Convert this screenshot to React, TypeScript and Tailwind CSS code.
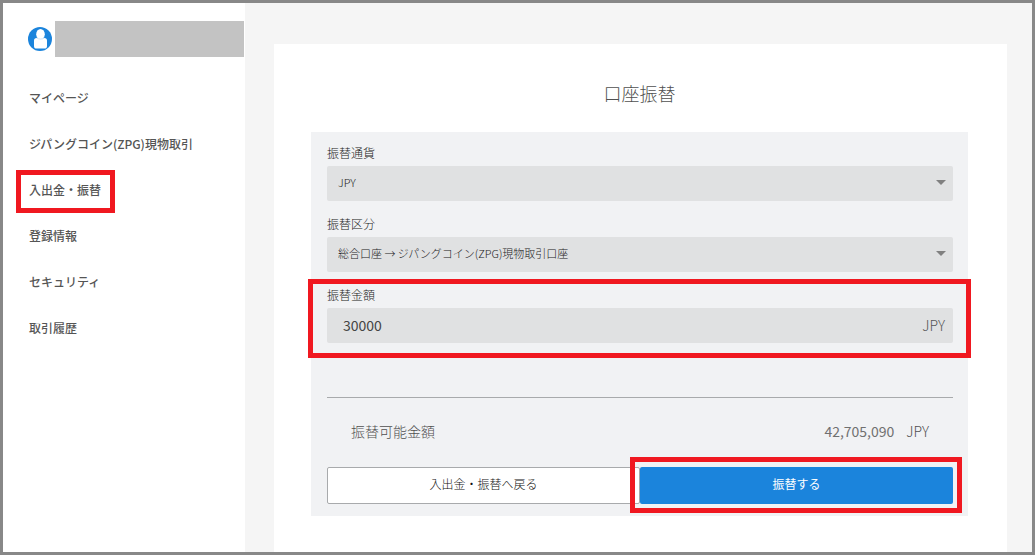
import React from 'react';

const menuItems = [
  { label: 'マイページ' },
  { label: 'ジパングコイン(ZPG)現物取引' },
  { label: '入出金・振替', marked: true },
  { label: '登録情報' },
  { label: 'セキュリティ' },
  { label: '取引履歴' },
];

function UserIcon() {
  return (
    <svg viewBox="0 0 24 24" className="w-6 h-6 shrink-0" aria-hidden="true">
      <circle cx="12" cy="12" r="12" fill="#1b84dc" />
      <rect x="6" y="11" width="13" height="10.500" rx="2.600" fill="#fff" />
      <ellipse cx="12.500" cy="7.300" rx="4.300" ry="5.200" fill="#fff" />
      <path d="M8.600 11c1.900 1.400 5.900 1.400 7.800 0" fill="none" stroke="#bcdaf5" strokeWidth=".8" />
    </svg>
  );
}

function Sidebar() {
  return (
    <aside className="w-[242px] shrink-0 bg-white pt-[18px]">
      <div className="flex items-center gap-[3px] pl-[25px] pr-px">
        <UserIcon />
        <div className="h-9 flex-1 bg-[#c3c3c3]" />
      </div>
      <nav className="mt-[31px] pl-[26px]">
        <ul className="flex flex-col items-start gap-[26px]">
          {menuItems.map((item) => (
            <li key={item.label} className="relative h-5">
              <a href="#" className="block text-[12px] leading-5 font-medium text-[#555]">
                {item.label}
              </a>
              {item.marked && (
                <span className="absolute -left-[13px] -right-[14px] -top-[10px] -bottom-[13px] border-[5px] border-[#f01820] pointer-events-none" />
              )}
            </li>
          ))}
        </ul>
      </nav>
    </aside>
  );
}

interface SelectFieldProps {
  id: string;
  label: string;
  value: string;
}

function SelectField({ id, label, value }: SelectFieldProps) {
  return (
    <div>
      <label htmlFor={id} className="block mb-[3px] text-[12px] leading-5 text-[#222]">
        {label}
      </label>
      <div className="relative">
        <select
          id={id}
          className="block appearance-none w-full h-[35px] rounded-xs bg-[#e0e1e2] pl-[11px] pr-8 pb-[3px] text-[11px] text-[#222]"
        >
          <option>{value}</option>
        </select>
        <svg
          viewBox="0 0 10 5"
          className="absolute right-[7px] top-[14px] w-[10px] h-[5px] pointer-events-none"
          aria-hidden="true"
        >
          <path d="M0 0h10L5 5z" fill="#808080" />
        </svg>
      </div>
    </div>
  );
}

export default function App() {
  return (
    <div className="min-h-screen flex border-[3px] border-[#888] bg-[#f5f5f5] font-['Noto_Sans_CJK_JP',sans-serif] font-light">
      <Sidebar />

      <main className="flex-1 flex pt-[41px] pl-[29px] pr-[25px]">
        <div className="flex-1 bg-white pl-[37px] pr-[39px] pt-[35px] pb-9">
          <h1 className="text-center text-[18px] leading-7 text-[#505050]">口座振替</h1>

          <form className="mt-[25px] bg-[#f1f2f4] pl-4 pr-[15px] pt-[11px] pb-3" onSubmit={(e) => e.preventDefault()}>
            <div className="flex flex-col gap-[13px]">
              <SelectField id="currency" label="振替通貨" value="JPY" />
              <SelectField id="kind" label="振替区分" value="総合口座 → ジパングコイン(ZPG)現物取引口座" />

              {/* 振替金額 */}
              <div className="relative">
                <label htmlFor="amount" className="block mb-[3px] text-[12px] leading-5 text-[#222]">
                  振替金額
                </label>
                <div className="flex items-center h-[35px] rounded-xs bg-[#e0e1e2] pl-4 pr-2 text-[14px]">
                  <input
                    id="amount"
                    type="text"
                    defaultValue="30000"
                    className="flex-1 min-w-0 bg-transparent font-normal text-[#444]"
                  />
                  <span className="text-[#555]">JPY</span>
                </div>
                <span className="absolute -left-[19px] -right-[18px] -top-[6px] -bottom-[15px] border-[5px] border-[#f01820] pointer-events-none" />
              </div>
            </div>

            {/* 振替可能金額 */}
            <div className="mt-[54px] border-t border-[#a8aaac] px-6 pt-[23px] pb-[26px] flex justify-between text-[14px] leading-5 text-[#505050]">
              <span>振替可能金額</span>
              <span className="flex gap-3">
                <span className="font-normal text-[#707070]">42,705,090</span>
                <span>JPY</span>
              </span>
            </div>

            <div className="grid grid-cols-2 text-[12px]">
              <button type="button" className="h-[37px] rounded-xs border border-[#a8aaac] bg-white pb-[3px] text-[#111]">
                入出金・振替へ戻る
              </button>
              <div className="relative">
                <button type="submit" className="w-full h-[37px] rounded-xs bg-[#1b84dc] pb-[3px] font-normal text-white">
                  振替する
                </button>
                <span className="absolute -left-[10px] -right-[9px] -top-[10px] -bottom-[9px] border-[5px] border-[#f01820] pointer-events-none" />
              </div>
            </div>
          </form>
        </div>
      </main>
    </div>
  );
}
